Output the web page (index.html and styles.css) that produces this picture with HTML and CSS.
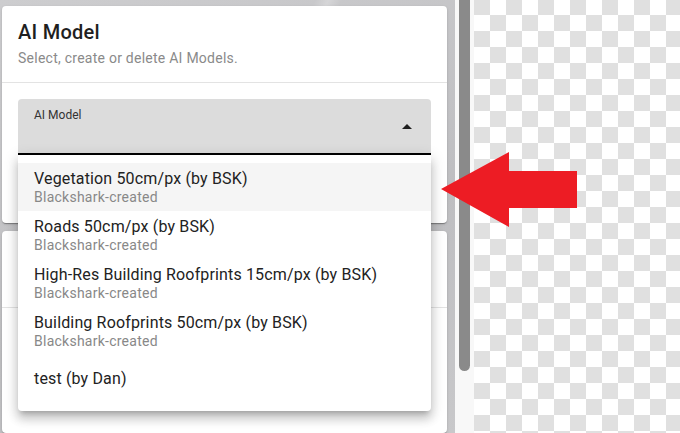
FILE: index.html
```html
<!DOCTYPE html>
<html lang="en">
<head>
  <meta charset="UTF-8" />
  <meta name="viewport" content="width=device-width, initial-scale=1.0" />
  <title>AI Model</title>
  <link rel="stylesheet" href="styles.css">
</head>
<body>
  <div class="panel">
    <div class="card card-model">
      <div class="card-head">
        <div class="card-title">AI Model</div>
        <div class="card-subtitle">Select, create or delete AI Models.</div>
      </div>
      <div class="card-body">
        <div class="field">
          <div class="field-input">
            <span class="field-label">AI Model</span>
            <svg class="field-icon" width="24" height="24" viewBox="0 0 24 24">
              <path d="M7 14l5-5 5 5z" fill="#1f1f1f" />
            </svg>
          </div>
          <div class="menu">
            <div class="item active">
              <div class="item-title">Vegetation 50cm/px (by BSK)</div>
              <div class="item-sub">Blackshark-created</div>
            </div>
            <div class="item">
              <div class="item-title">Roads 50cm/px (by BSK)</div>
              <div class="item-sub">Blackshark-created</div>
            </div>
            <div class="item">
              <div class="item-title">High-Res Building Roofprints 15cm/px (by BSK)</div>
              <div class="item-sub">Blackshark-created</div>
            </div>
            <div class="item">
              <div class="item-title">Building Roofprints 50cm/px (by BSK)</div>
              <div class="item-sub">Blackshark-created</div>
            </div>
            <div class="item">
              <div class="item-title">test (by Dan)</div>
            </div>
          </div>
        </div>
      </div>
    </div>

    <div class="card card-next">
      <div class="card-head empty"></div>
    </div>
  </div>

  <div class="scroll">
    <div class="thumb"></div>
  </div>

  <div class="canvas"></div>

  <svg class="arrow" width="136" height="75" viewBox="0 0 136 75">
    <polygon points="0,37 68,0 68,19 136,19 136,56 68,56 68,75" fill="#ed1c24" />
  </svg>
</body>
</html>
```

FILE: styles.css
```css
* {
  box-sizing: border-box;
}

body {
  margin: 0;
  height: 433px;
  overflow: hidden;
  display: flex;
  font-family: Roboto, "Noto Sans", Arial, sans-serif;
  color: rgba(0,0,0,0.87);
  background: #fff;
}

.panel {
  width: 455px;
  flex: none;
  overflow: hidden;
  padding: 6px 8px 0 2px;
  background:
    linear-gradient(115deg, transparent 48%, rgba(255,255,255,0.25) 50%, transparent 52%),
    linear-gradient(160deg, #cdcdcf, #bebec1 60%, #c8c8ca);
}

.card {
  background: white;
  border-radius: 4px;
  box-shadow: 0 2px 1px -1px rgba(0,0,0,0.2), 0 1px 1px 0 rgba(0,0,0,0.14), 0 1px 3px 0 rgba(0,0,0,0.12);
}

.card-model {
  position: relative;
  margin-bottom: 8px;
}

.card-next {
  height: 202px;
}

.card-head {
  padding: 10px 16px 14px;
  border-bottom: 1px solid #e3e3e3;
}

.card-head.empty {
  height: 77px;
}

.card-title {
  font-size: 20px;
  line-height: 32px;
  font-weight: 500;
  letter-spacing: 0.25px;
  color: #1f1f1f;
}

.card-subtitle {
  font-size: 14px;
  line-height: 20px;
  letter-spacing: 0.25px;
  color: #8a8a8a;
}

.card-body {
  padding: 16px 16px 68px;
}

.field {
  position: relative;
}

.field-input {
  height: 56px;
  display: flex;
  align-items: flex-start;
  padding: 8px 12px 0 16px;
  background: #dcdcdc;
  border-radius: 4px 4px 0 0;
  border-bottom: 2px solid #000;
}

.field-label {
  flex: 1;
  font-size: 12px;
  line-height: 16px;
  color: #333;
}

.field-icon {
  margin-top: 8px;
}

.menu {
  position: absolute;
  top: 100%;
  left: 0;
  right: 0;
  z-index: 10;
  padding: 8px 0;
  background: white;
  border-radius: 0 0 4px 4px;
  box-shadow: 0 5px 5px -3px rgba(0,0,0,0.2), 0 8px 10px 1px rgba(0,0,0,0.14), 0 3px 14px 2px rgba(0,0,0,0.12);
}

.item {
  height: 48px;
  padding: 0 16px;
  display: flex;
  flex-direction: column;
  justify-content: center;
}

.item.active {
  background: #f5f5f5;
}

.item-title {
  font-size: 16px;
  line-height: 20px;
  letter-spacing: 0.15px;
  color: #222;
}

.item-sub {
  font-size: 14px;
  line-height: 16px;
  letter-spacing: 0.25px;
  color: #888;
}

.scroll {
  width: 19px;
  flex: none;
  padding: 0 4px;
  background: #f8f8f8;
}

.thumb {
  height: 371px;
  background: #8a8a8a;
  border-radius: 0 0 6px 6px;
}

.canvas {
  flex: 1;
  background: repeating-conic-gradient(#fff 0 25%, #e0e0e0 0 50%) 0 -1px / 32px 32px;
}

.arrow {
  position: absolute;
  left: 441px;
  top: 152px;
}
```
